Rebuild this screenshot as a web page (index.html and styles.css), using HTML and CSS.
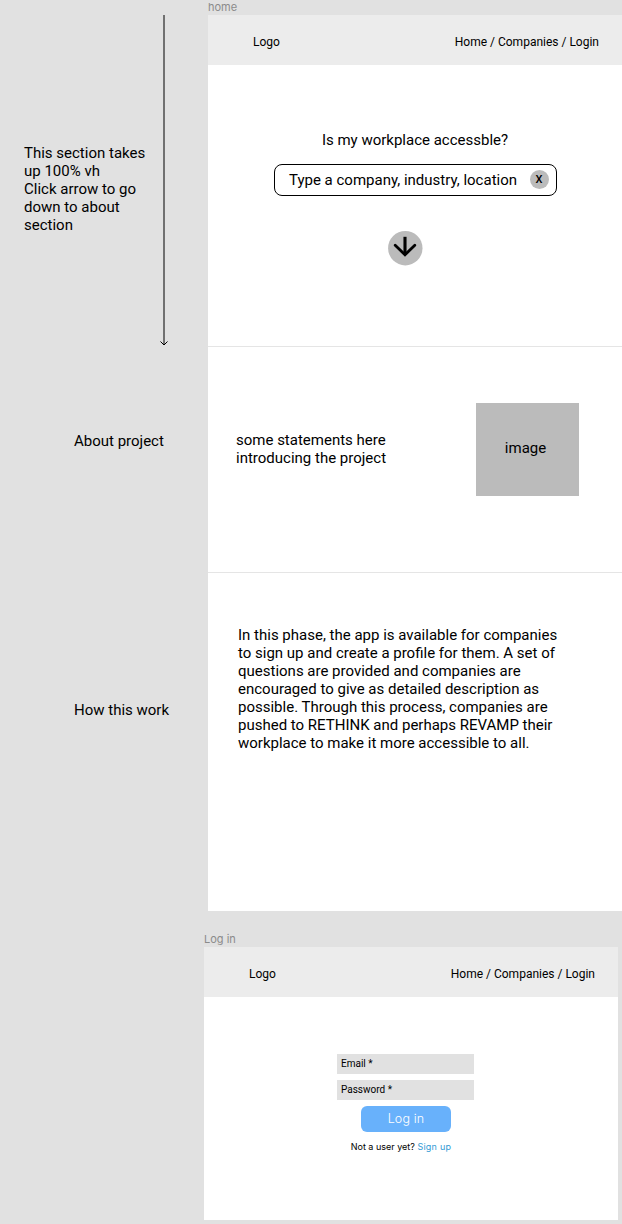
FILE: index.html
```html
<!DOCTYPE html>
<html lang="en">
<head>
<meta charset="utf-8">
<title>Wireframes</title>
<link rel="stylesheet" href="styles.css">
</head>
<body>
<main class="board">
  <aside class="notes">
    <div class="note-hero">
      <p class="note">This section takes<br>up 100% vh<br>Click arrow to go<br>down to about<br>section</p>
      <svg class="span-arrow" width="10" height="332" viewBox="0 0 10 332" fill="none" stroke="#000"><path d="M5 0V330M1.5 326.5L5 330L8.5 326.5"/></svg>
    </div>
    <p class="note note-about">About project</p>
    <p class="note note-how">How this work</p>
  </aside>
  <div class="frames">
    <div class="frame-label">home</div>
    <section class="frame frame-home">
      <header class="bar"><span>Logo</span><nav>Home / Companies / Login</nav></header>
      <div class="hero">
        <h1 class="question">Is my workplace accessble?</h1>
        <div class="search"><span>Type a company, industry, location</span><span class="clear">X</span></div>
        <svg class="down" width="36" height="36" viewBox="0 0 36 36" fill="none"><circle cx="18.3" cy="18.2" r="17.2" fill="#bbb"/><path d="M18 6.8V24" stroke="#000" stroke-width="3.1"/><path d="M8.2 15.3L18 24.8L27.8 15.3" stroke="#000" stroke-width="2.8" stroke-linecap="round"/></svg>
      </div>
      <div class="about">
        <p class="statement">some statements here<br>introducing the project</p>
        <div class="image">image</div>
      </div>
      <div class="how">
        <p>In this phase, the app is available for companies<br>to sign up and create a profile for them. A set of<br>questions are provided and companies are<br>encouraged to give as detailed description as<br>possible. Through this process, companies are<br>pushed to RETHINK and perhaps REVAMP their<br>workplace to make it more accessible to all.</p>
      </div>
    </section>
    <div class="login-group">
      <div class="frame-label">Log in</div>
      <section class="frame frame-login">
        <header class="bar"><span>Logo</span><nav>Home / Companies / Login</nav></header>
        <form class="form">
          <div class="field">Email *</div>
          <div class="field">Password *</div>
          <div class="submit">Log in</div>
          <p class="signup">Not a user yet? <span class="link">Sign up</span></p>
        </form>
      </section>
    </div>
  </div>
</main>
</body>
</html>
```

FILE: styles.css
```css
* { box-sizing: border-box; }
body, p, h1 { margin: 0; }
body {
  background: #e1e1e1;
  color: #000;
  font: 15px/18px Roboto, sans-serif;
}
.board {
  display: grid;
  grid-template-columns: 208px 414px;
  height: 1224px;
  overflow: hidden;
}
.notes { padding-top: 15px; }
.note-hero {
  display: flex;
  justify-content: space-between;
  padding: 0 39px 0 24px;
  height: 332px;
}
.note-hero .note { padding-top: 129px; white-space: nowrap; }
.span-arrow { flex: none; }
.note-about { padding: 85px 0 0 74px; }
.note-how { padding: 251px 0 0 74px; }
.frame-label {
  height: 15px;
  font: 11px/14px Inter, sans-serif;
  color: #8b8b8b;
}
.frame { background: #fff; }
.frame-home { height: 896px; }
.bar {
  display: flex;
  justify-content: space-between;
  height: 50px;
  padding: 20px 23px 0 45px;
  background: #ececec;
  font-size: 12px;
  line-height: 14px;
}
.hero {
  display: flex;
  flex-direction: column;
  align-items: center;
  height: 282px;
  padding-top: 66px;
  border-bottom: 1px solid #e5e5e5;
}
.question { font-size: 15px; font-weight: 400; line-height: 18px; }
.search {
  display: flex;
  align-items: center;
  justify-content: space-between;
  width: 283px;
  height: 32px;
  margin-top: 15px;
  padding: 0 7px 1px 14.5px;
  border: 1px solid #000;
  border-radius: 8px;
}
.clear {
  width: 19px;
  height: 19px;
  border-radius: 50%;
  background: #bbb;
  font-size: 11px;
  font-weight: 500;
  line-height: 20px;
  text-align: center;
}
.down { margin: 34px 20px 0 0; }
.about {
  display: flex;
  justify-content: space-between;
  align-items: flex-start;
  height: 226px;
  padding: 56px 43px 0 28px;
  border-bottom: 1px solid #e5e5e5;
}
.statement { padding-top: 28px; }
.image {
  width: 103px;
  height: 93px;
  padding: 36px 4px 0 0;
  background: #bbb;
  text-align: center;
}
.how { padding: 53px 0 0 30px; white-space: nowrap; }
.login-group { margin: 21px 4px 0 -4px; }
.frame-login { height: 273px; }
.form {
  display: flex;
  flex-direction: column;
  align-items: center;
  padding: 57px 11px 0 0;
}
.field {
  width: 137px;
  height: 20px;
  margin-bottom: 6px;
  padding-left: 4px;
  background: #e1e1e1;
  font-size: 10px;
  line-height: 20px;
}
.submit {
  width: 90px;
  height: 26px;
  margin-left: 1px;
  border-radius: 6px;
  background: #68b1fb;
  color: #fff;
  font: 300 12.5px/26px Inter, sans-serif;
  letter-spacing: .15px;
  text-align: center;
}
.signup {
  padding: 8px 9px 0 0;
  font: 9px/14px Inter, sans-serif;
  white-space: nowrap;
}
.link { color: #329bd5; letter-spacing: .25px; }
```
